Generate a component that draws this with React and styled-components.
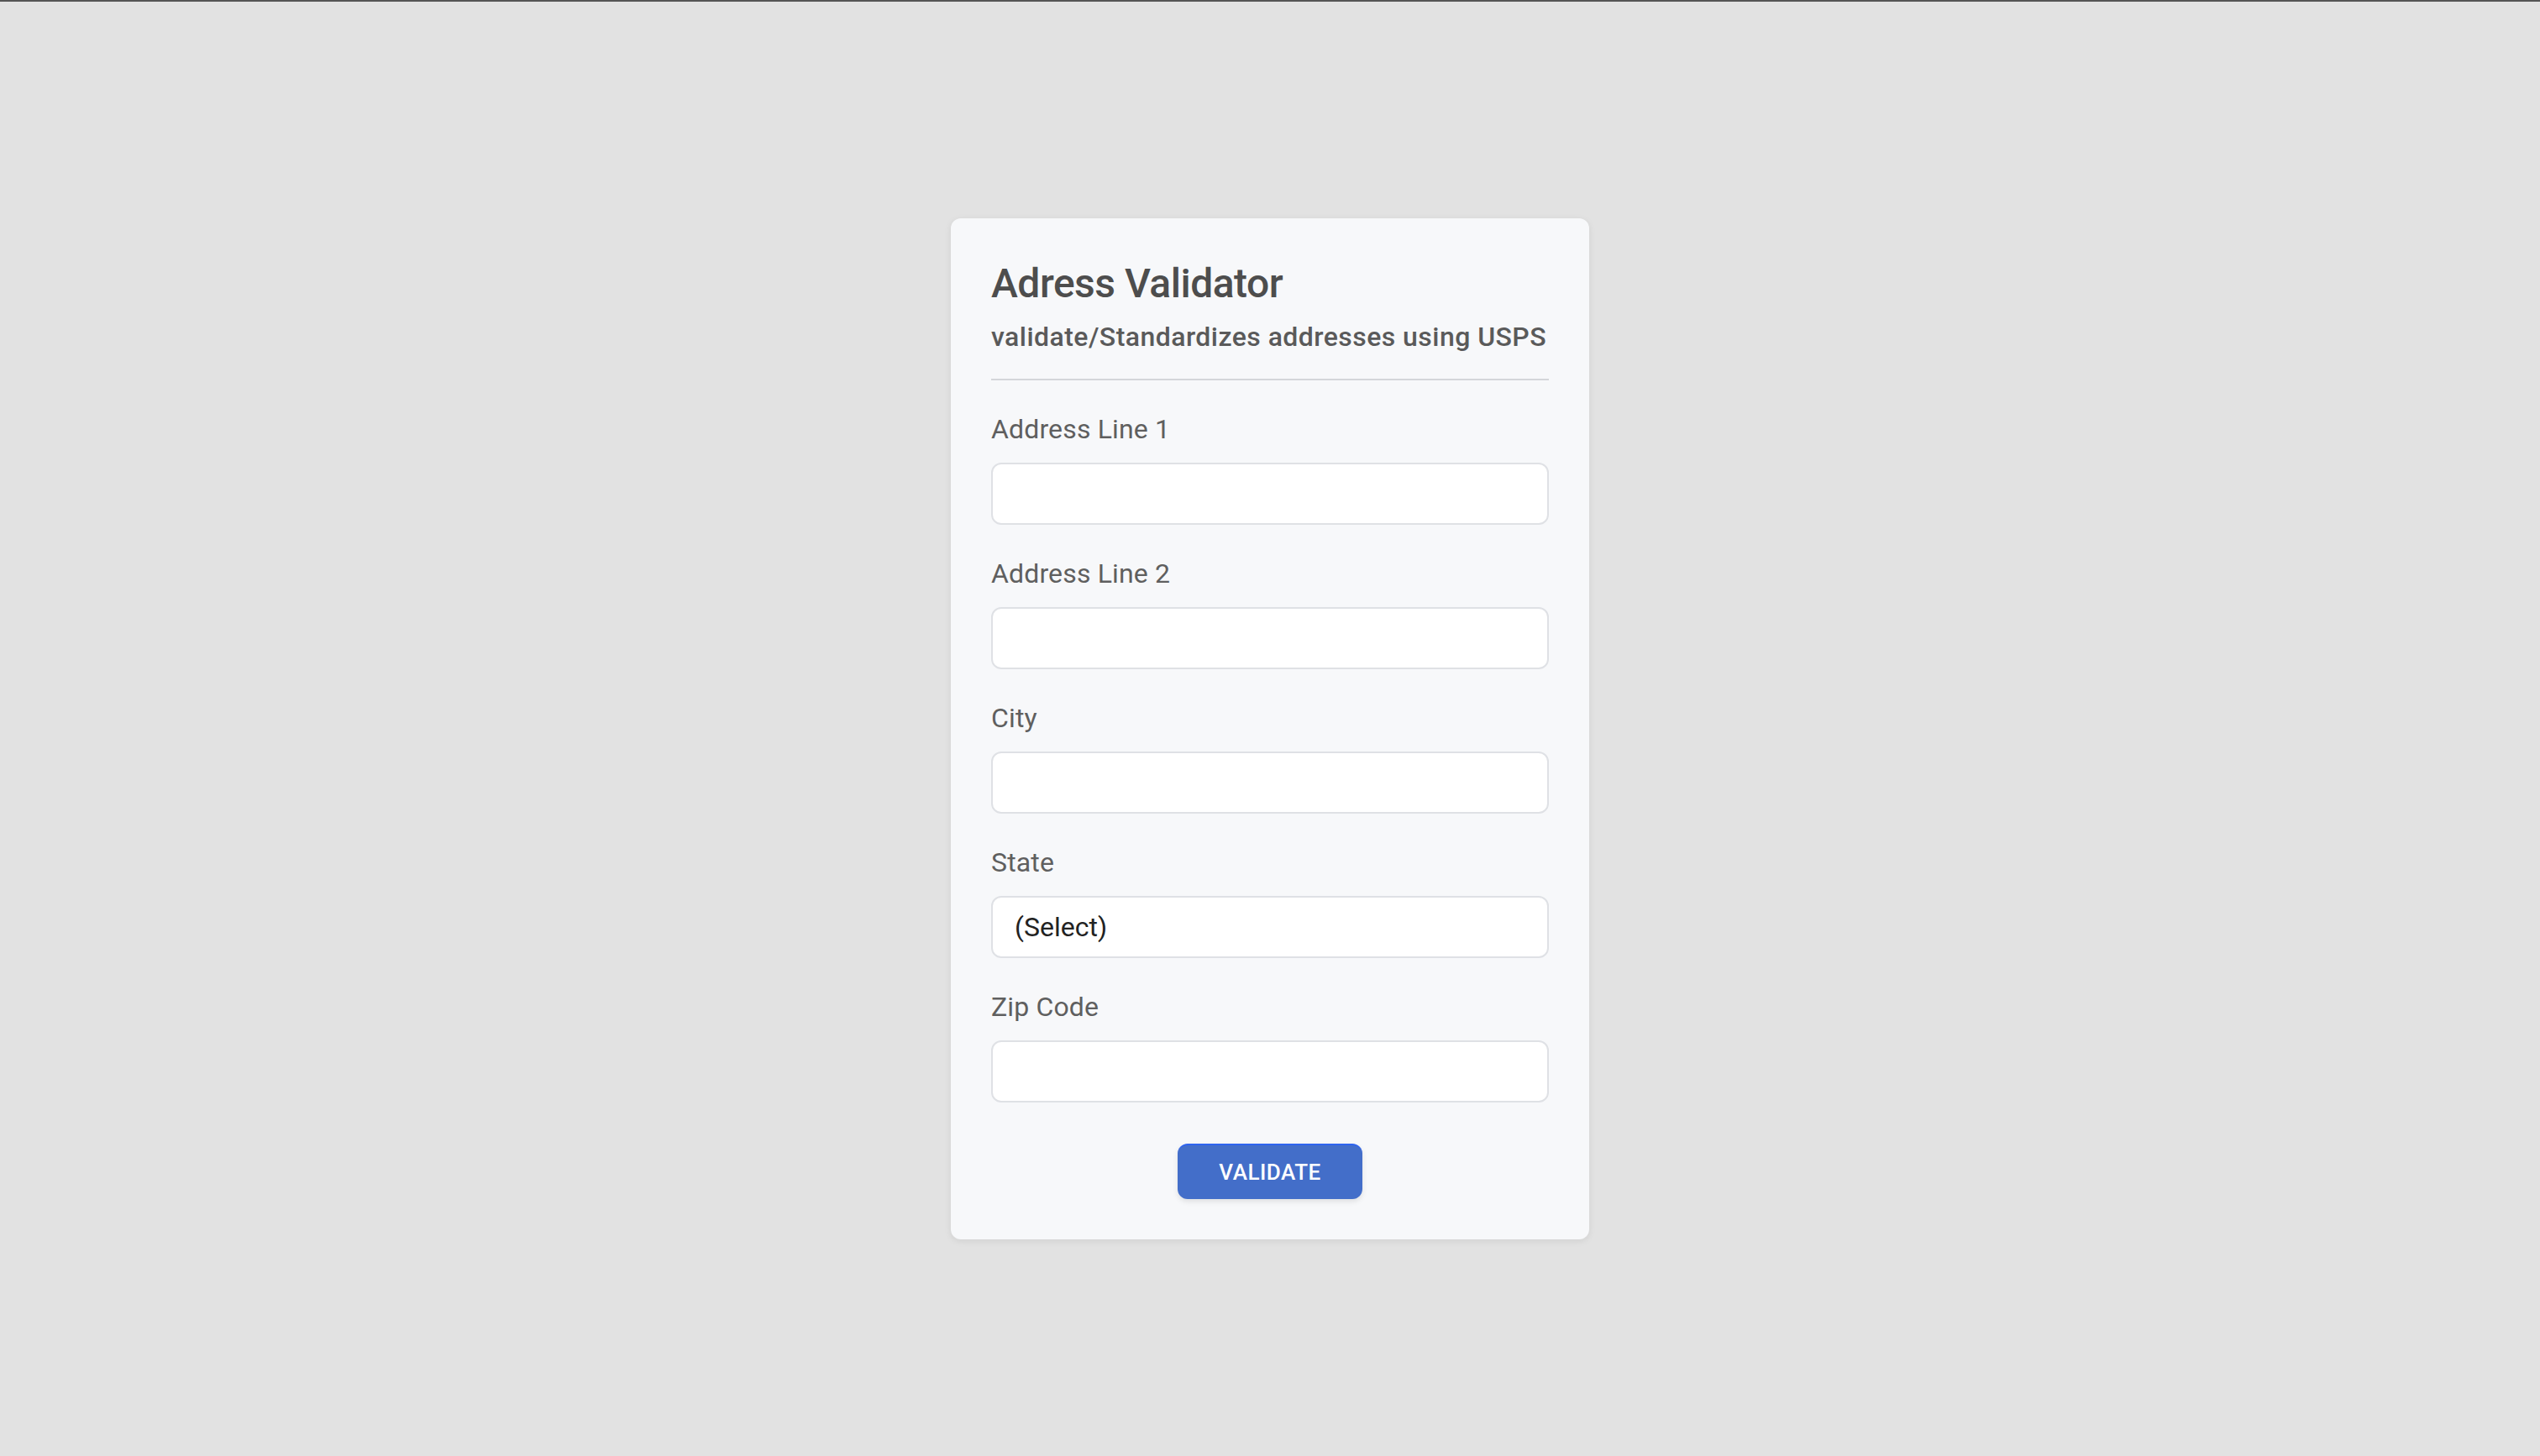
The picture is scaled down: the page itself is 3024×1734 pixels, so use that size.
import React from "react";
import styled, { createGlobalStyle } from "styled-components";

const fields = [
  { label: "Address Line 1", type: "input" },
  { label: "Address Line 2", type: "input" },
  { label: "City", type: "input" },
  { label: "State", type: "select" },
  { label: "Zip Code", type: "input" },
];

function App() {
  const [state, setState] = React.useState("");

  return (
    <>
      <GlobalStyle />
      <Page>
        <Card>
          <Title>Adress Validator</Title>
          <SubTitle>validate/Standardizes addresses using USPS</SubTitle>
          <Divider />
          <FormSection>
            {fields.map((f) => (
              <Field key={f.label}>
                <Label>{f.label}</Label>
                {f.type === "select" ? (
                  <Select value={state} onChange={(e) => setState(e.target.value)}>
                    <option value="">(Select)</option>
                    <option value="CA">CA</option>
                    <option value="NY">NY</option>
                    <option value="TX">TX</option>
                  </Select>
                ) : (
                  <Input type="text" />
                )}
              </Field>
            ))}
          </FormSection>
          <ButtonSection>
            <Button type="button">VALIDATE</Button>
          </ButtonSection>
        </Card>
      </Page>
    </>
  );
}

export default App;

const GlobalStyle = createGlobalStyle`
  * {
    box-sizing: border-box;
  }
  body {
    margin: 0;
    background: #e2e2e2;
    font-family: Roboto, "Liberation Sans", Arial, sans-serif;
    border-top: 2px solid #555555;
  }
`;

const Page = styled.div`
  min-height: calc(100vh - 2px);
  display: flex;
  align-items: center;
  justify-content: center;
`;

const Card = styled.div`
  width: 760px;
  background: #f7f8fa;
  border-radius: 12px;
  padding: 48px;
  display: flex;
  flex-direction: column;
  box-shadow: 0 2px 8px rgba(0, 0, 0, 0.08);
`;

const Title = styled.h1`
  margin: 0;
  font-size: 48px;
  line-height: 60px;
  font-weight: 500;
  letter-spacing: -0.5px;
  color: #4d4d4d;
`;

const SubTitle = styled.div`
  margin-top: 13px;
  font-size: 32px;
  line-height: 40px;
  font-weight: 500;
  letter-spacing: 0.45px;
  color: #5a5a5a;
`;

const Divider = styled.div`
  margin-top: 30px;
  height: 2px;
  background: #d4d6da;
`;

const FormSection = styled.div`
  margin-top: 38px;
  display: flex;
  flex-direction: column;
  gap: 38px;
`;

const Field = styled.div`
  display: flex;
  flex-direction: column;
  gap: 20px;
`;

const Label = styled.label`
  font-size: 32px;
  line-height: 40px;
  font-weight: 400;
  letter-spacing: 0.15px;
  color: #5f5f5f;
`;

const Input = styled.input`
  height: 74px;
  width: 100%;
  border: 2px solid #dfe1e5;
  border-radius: 12px;
  background: #ffffff;
  padding: 0 26px;
  font-family: inherit;
  font-size: 32px;
  color: #222;
  outline: none;
`;

const Select = styled.select`
  height: 74px;
  width: 100%;
  border: 2px solid #dfe1e5;
  border-radius: 12px;
  background: #ffffff;
  padding: 0 26px;
  font-family: inherit;
  font-size: 32px;
  color: #222;
  appearance: none;
  outline: none;
`;

const ButtonSection = styled.div`
  margin-top: 49px;
  display: flex;
  justify-content: center;
`;

const Button = styled.button`
  width: 220px;
  height: 66px;
  border: none;
  border-top: 2px solid #2f64ef;
  border-radius: 12px;
  background: #436ec9;
  color: #ffffff;
  font-family: inherit;
  font-size: 26px;
  font-weight: 500;
  letter-spacing: 0.5px;
  cursor: pointer;
  box-shadow: 0 3px 6px rgba(0, 0, 0, 0.1);
`;
